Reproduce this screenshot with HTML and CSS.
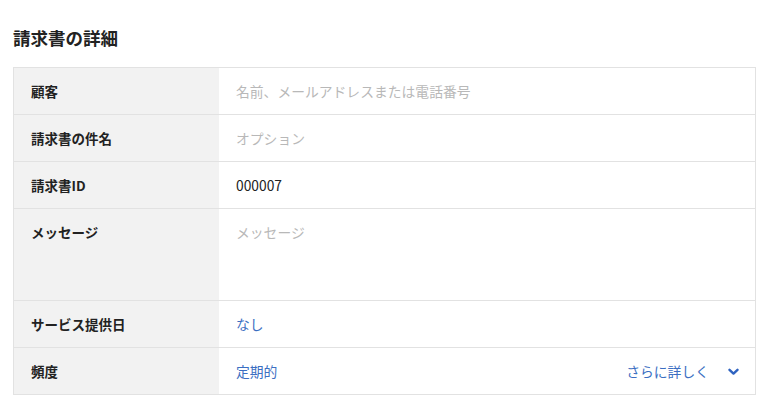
FILE: index.html
```html
<!DOCTYPE html>
<html lang="ja">
<head>
<meta charset="utf-8">
<link rel="stylesheet" href="styles.css">
</head>
<body>
<div class="page">
  <h1 class="title">請求書の詳細</h1>
  <div class="table">
    <div class="row">
      <div class="label">顧客</div>
      <div class="value placeholder">名前、メールアドレスまたは電話番号</div>
    </div>
    <div class="row">
      <div class="label">請求書の件名</div>
      <div class="value placeholder">オプション</div>
    </div>
    <div class="row">
      <div class="label">請求書ID</div>
      <div class="value">000007</div>
    </div>
    <div class="row tall">
      <div class="label">メッセージ</div>
      <div class="value placeholder">メッセージ</div>
    </div>
    <div class="row">
      <div class="label">サービス提供日</div>
      <div class="value link">なし</div>
    </div>
    <div class="row">
      <div class="label">頻度</div>
      <div class="value link split">
        <span>定期的</span>
        <span class="more">さらに詳しく
          <svg class="chev" width="11" height="8" viewBox="0 0 11 8"><path d="M1.5 1.8 L5.5 5.6 L9.5 1.8" fill="none" stroke="#2f63c0" stroke-width="2.4" stroke-linecap="round" stroke-linejoin="round"/></svg>
        </span>
      </div>
    </div>
  </div>
</div>
</body>
</html>
```
FILE: styles.css
```css
* { box-sizing: border-box; }
html, body { margin: 0; padding: 0; background: #fff; }
body {
  font-family: "Noto Sans CJK JP", "Noto Sans", sans-serif;
  color: #222;
}
.page {
  padding: 26px 12px 0 13px;
}
.title {
  margin: 0 0 17px 0;
  font-size: 17.5px;
  font-weight: 700;
  line-height: 24px;
  color: #222;
}
.table {
  border: 1px solid #e2e2e2;
  width: 743px;
}
.row {
  display: flex;
  height: 47px;
  border-top: 1px solid #e2e2e2;
}
.row:first-child { border-top: none; height: 46px; }
.row.tall { height: 92px; }
.label {
  width: 205px;
  flex: none;
  background: #f2f2f2;
  padding: 13px 0 0 17px;
  font-size: 13.5px;
  font-weight: 700;
  line-height: 20px;
  color: #222;
}
.value {
  flex: 1;
  padding: 13px 0 0 17px;
  font-size: 13.8px;
  line-height: 20px;
  color: #222;
}
.placeholder { color: #b8b8b8; }
.link { color: #3b6ec2; }
.split {
  display: flex;
  align-items: flex-start;
  justify-content: space-between;
  padding-right: 16px;
}
.more {
  display: flex;
  align-items: center;
  height: 20px;
  gap: 19px;
}
.chev { display: block; margin-top: 2px; }
```
